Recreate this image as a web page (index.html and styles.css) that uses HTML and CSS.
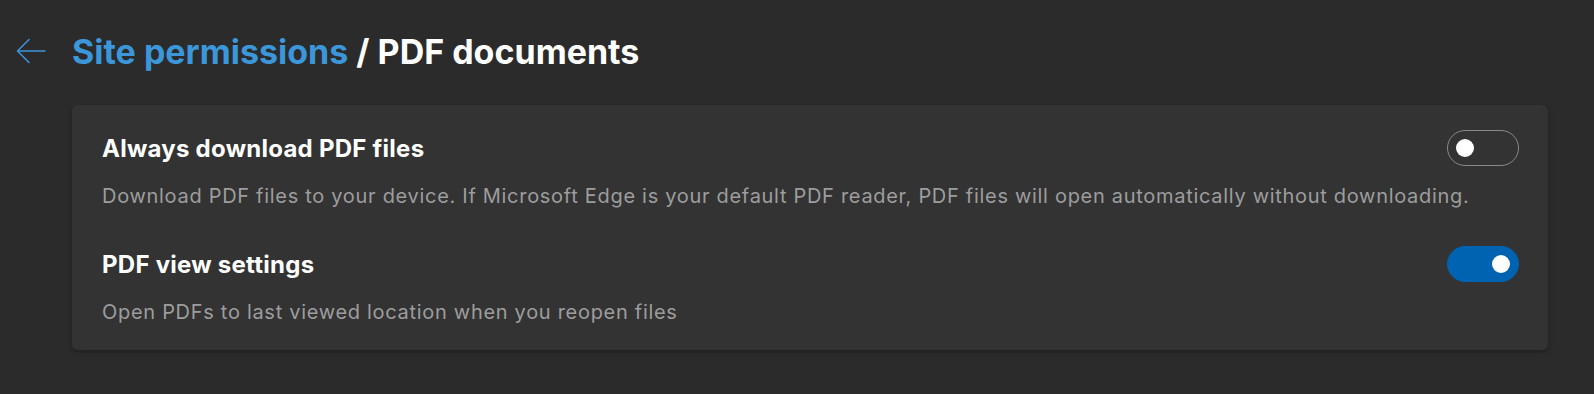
FILE: index.html
```html
<!DOCTYPE html>
<html lang="en">
<head>
  <meta charset="UTF-8" />
  <title>PDF documents</title>
  <link rel="stylesheet" href="styles.css">
</head>
<body>

  <header class="page-head">
    <button class="back-btn" aria-label="Back">
      <svg width="30" height="26" viewBox="0 0 30 26" fill="none" stroke="currentColor" stroke-width="1.5" stroke-linecap="round" stroke-linejoin="round">
        <path d="M29 13H2" />
        <path d="M13 1.5L1.5 13L13 24.5" />
      </svg>
    </button>
    <h1><a href="#" class="crumb">Site permissions</a> / PDF documents</h1>
  </header>

  <section class="card">
    <div class="setting">
      <div class="setting-head">
        <h2>Always download PDF files</h2>
        <label class="toggle"><input type="checkbox" /><span class="track"></span></label>
      </div>
      <p class="desc">Download PDF files to your device. If Microsoft Edge is your default PDF reader, PDF files will open automatically without downloading.</p>
    </div>

    <div class="setting">
      <div class="setting-head">
        <h2>PDF view settings</h2>
        <label class="toggle"><input type="checkbox" checked /><span class="track"></span></label>
      </div>
      <p class="desc">Open PDFs to last viewed location when you reopen files</p>
    </div>
  </section>

</body>
</html>
```

FILE: styles.css
```css
:root {
  --bg: #2b2b2b;
  --card: #333333;
  --link: #3b97d9;
  --text: #ffffff;
  --muted: #9d9d9d;
  --accent: #0063b1;
}

* {
  margin: 0;
  padding: 0;
  box-sizing: border-box;
}

body {
  font-family: 'Inter', 'Noto Sans', sans-serif;
  background: var(--bg);
  color: var(--text);
  min-height: 100vh;
  padding: 0 46px 0 16px;
}

.page-head {
  display: flex;
  align-items: center;
  height: 100px;
  padding-top: 2px;
}

.back-btn {
  width: 56px;
  height: 30px;
  display: flex;
  align-items: center;
  background: none;
  border: none;
  color: var(--link);
  cursor: pointer;
}

.page-head h1 {
  font-size: 34px;
  font-weight: 700;
}

.crumb {
  color: var(--link);
  text-decoration: none;
}

.card {
  margin: 5px 0 0 56px;
  background: var(--card);
  border-radius: 6px;
  box-shadow: 0 2px 4px rgba(0, 0, 0, 0.25);
  padding: 25px 29px 26px 30px;
  display: flex;
  flex-direction: column;
  gap: 38px;
}

.setting-head {
  display: flex;
  justify-content: space-between;
  align-items: center;
  height: 36px;
}

.setting-head h2 {
  font-size: 24px;
  font-weight: 700;
  letter-spacing: 0.25px;
}

.desc {
  margin-top: 18px;
  font-size: 20px;
  line-height: 24px;
  letter-spacing: 0.7px;
  color: var(--muted);
}

.toggle {
  position: relative;
  display: block;
  width: 72px;
  height: 36px;
  cursor: pointer;
}

.toggle input {
  display: none;
}

.track {
  position: absolute;
  inset: 0;
  border: 1px solid #8a8a8a;
  border-radius: 999px;
}

.track::after {
  content: '';
  position: absolute;
  top: 8px;
  left: 8px;
  width: 18px;
  height: 18px;
  border-radius: 50%;
  background: #fff;
}

.toggle input:checked + .track {
  background: var(--accent);
  border-color: var(--accent);
}

.toggle input:checked + .track::after {
  left: 44px;
}
```
